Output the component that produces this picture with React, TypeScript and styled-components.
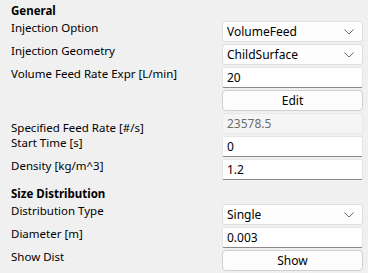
import styled, { createGlobalStyle } from "styled-components";

const GlobalStyle = createGlobalStyle`
  html, body {
    margin: 0;
    padding: 0;
    background: #f0f0f0;
  }
  body {
    font-family: "Noto Sans", "Open Sans", sans-serif;
    font-size: 11.5px;
    color: #000;
  }
`;

interface Row {
  label?: string;
  kind: "combo" | "edit" | "button" | "disabled";
  value: string;
  low?: boolean;
}

const general: Row[] = [
  { label: "Injection Option", kind: "combo", value: "VolumeFeed" },
  { label: "Injection Geometry", kind: "combo", value: "ChildSurface" },
  { label: "Volume Feed Rate Expr [L/min]", kind: "edit", value: "20" },
  { kind: "button", value: "Edit" },
  { label: "Specified Feed Rate [#/s]", kind: "disabled", value: "23578.5", low: true },
  { label: "Start Time [s]", kind: "edit", value: "0" },
  { label: "Density [kg/m^3]", kind: "edit", value: "1.2" },
];

const sizeDist: Row[] = [
  { label: "Distribution Type", kind: "combo", value: "Single" },
  { label: "Diameter [m]", kind: "edit", value: "0.003" },
  { label: "Show Dist", kind: "button", value: "Show" },
];

function Chevron() {
  return (
    <svg width="10" height="6" viewBox="0 0 10 6">
      <path d="M0.5 0.5 L5 5 L9.5 0.5" fill="none" stroke="#6a6a6a" strokeWidth="1" />
    </svg>
  );
}

function Field({ row }: { row: Row }) {
  if (row.kind === "combo") {
    return (
      <Combo>
        <span>{row.value}</span>
        <Chevron />
      </Combo>
    );
  }
  if (row.kind === "button") return <Button>{row.value}</Button>;
  return <LineEdit $disabled={row.kind === "disabled"}>{row.value}</LineEdit>;
}

function Section({ title, rows }: { title: string; rows: Row[] }) {
  return (
    <>
      <Header>{title}</Header>
      {rows.map((r, i) => (
        <FormRow key={i}>
          <Label $low={r.low}>{r.label ?? ""}</Label>
          <Field row={r} />
        </FormRow>
      ))}
    </>
  );
}

export default function App() {
  return (
    <>
      <GlobalStyle />
      <Panel>
        <Section title="General" rows={general} />
        <Section title="Size Distribution" rows={sizeDist} />
      </Panel>
    </>
  );
}

const Panel = styled.div`
  width: 368px;
  height: 273px;
  box-sizing: border-box;
  padding: 0 5px 0 11px;
  display: flex;
  flex-direction: column;
  gap: 2px;
`;

const Header = styled.div`
  font-weight: 700;
  line-height: 16px;
  height: 19px;
  padding-top: 3px;
  box-sizing: border-box;
  display: flex;
  align-items: center;
  &:not(:first-child) {
    height: 20px;
    padding-top: 4px;
  }
`;

const FormRow = styled.div`
  display: grid;
  grid-template-columns: 1fr 141px;
  height: 21px;
`;

const Label = styled.div<{ $low?: boolean }>`
  line-height: 14px;
  align-self: ${(p) => (p.$low ? "end" : "start")};
  margin-bottom: ${(p) => (p.$low ? "-1px" : "0")};
  white-space: nowrap;
`;

const Box = styled.div`
  box-sizing: border-box;
  height: 21px;
  display: flex;
  align-items: center;
  padding: 0 4px;
  white-space: nowrap;
  font-size: 12px;
`;

const Combo = styled(Box)`
  justify-content: space-between;
  background: #fdfdfd;
  border: 1px solid #dedede;
  border-radius: 3px;
  padding-right: 8px;
`;

const LineEdit = styled(Box)<{ $disabled?: boolean }>`
  background: ${(p) => (p.$disabled ? "#f5f5f5" : "#ffffff")};
  color: ${(p) => (p.$disabled ? "#6d6d6d" : "#000")};
  border: 1px solid ${(p) => (p.$disabled ? "#e8e8e8" : "#e5e5e5")};
  border-bottom-color: ${(p) => (p.$disabled ? "#e8e8e8" : "#8a8a8a")};
  border-radius: 2px;
`;

const Button = styled(Box)`
  justify-content: center;
  background: #fdfdfd;
  border: 1px solid #d0d0d0;
  border-radius: 4px;
`;
